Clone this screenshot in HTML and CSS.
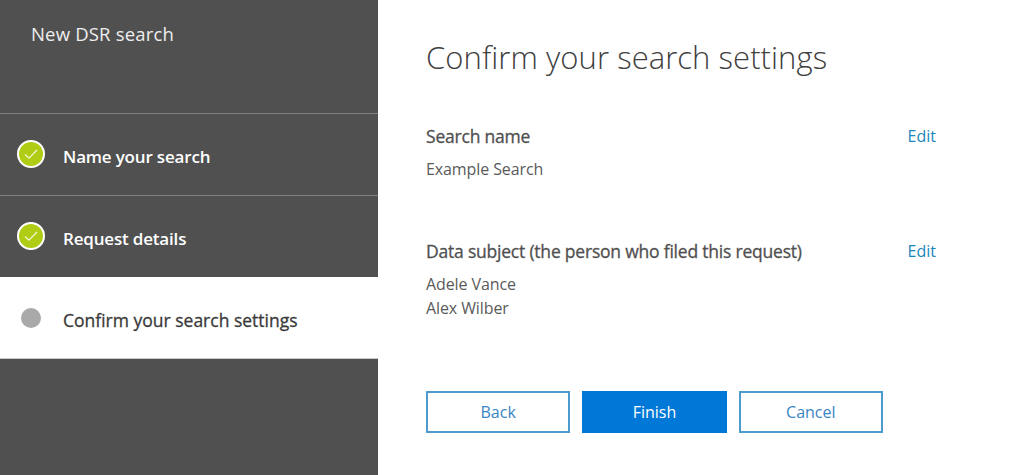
FILE: index.html
```html
<!DOCTYPE html>
<html lang="en">
<head>
    <meta charset="UTF-8">
    <title>New DSR search</title>
    <link rel="stylesheet" href="styles.css">
</head>
<body>
    <div class="wizard">
        <nav class="sidebar">
            <div class="sidebar-title">New DSR search</div>
            <div class="step">
                <span class="step-icon done">
                    <svg viewBox="0 0 16 16" width="16" height="16"><path d="M2 8.5 L6 12.2 L14 4" fill="none" stroke="#f2f8cf" stroke-width="1.3"/></svg>
                </span>
                <span class="step-label">Name your search</span>
            </div>
            <div class="step">
                <span class="step-icon done">
                    <svg viewBox="0 0 16 16" width="16" height="16"><path d="M2 8.5 L6 12.2 L14 4" fill="none" stroke="#f2f8cf" stroke-width="1.3"/></svg>
                </span>
                <span class="step-label">Request details</span>
            </div>
            <div class="step current">
                <span class="step-icon pending"></span>
                <span class="step-label">Confirm your search settings</span>
            </div>
        </nav>
        <main class="content">
            <h1 class="page-title">Confirm your search settings</h1>
            <section class="summary summary-name">
                <div class="summary-head">
                    <h2>Search name</h2>
                    <a class="edit" href="#">Edit</a>
                </div>
                <p>Example Search</p>
            </section>
            <section class="summary summary-subject">
                <div class="summary-head">
                    <h2>Data subject (the person who filed this request)</h2>
                    <a class="edit" href="#">Edit</a>
                </div>
                <p>Adele Vance</p>
                <p>Alex Wilber</p>
            </section>
            <div class="actions">
                <button class="btn">Back</button>
                <button class="btn primary">Finish</button>
                <button class="btn">Cancel</button>
            </div>
        </main>
    </div>
</body>
</html>
```

FILE: styles.css
```css
html, body {
    margin: 0; padding: 0; height: 100%;
    background: #fff;
    overflow: hidden;
}

body { font-family: "Open Sans", "Noto Sans", sans-serif; color: #505050; }

.wizard { display: flex; height: 475px; }

.sidebar {
    width: 378px; flex: none;
    background: #505050;
    color: #fff;
}
.sidebar-title {
    height: 113px; box-sizing: border-box;
    padding: 21px 0 0 31px;
    font-size: 18.5px; line-height: 25px;
    color: #eee;
    letter-spacing: 0.18px;
}

.step {
    height: 82px; box-sizing: border-box;
    display: flex; align-items: center;
    padding-left: 17px;
    border-top: 1px solid #808080;
    font-size: 17px; font-weight: 600;
    letter-spacing: -0.18px;
}
.step.current {
    background: #fff; color: #3a3a3a;
    border-top: none;
    border-bottom: 1px solid #c8c8c8;
    font-size: 17.5px; font-weight: 400;
    letter-spacing: 0;
    -webkit-text-stroke: 0.3px #3a3a3a;
}
.step-icon {
    width: 28px; height: 28px; box-sizing: border-box;
    border-radius: 50%;
    display: flex; align-items: center; justify-content: center;
    margin-right: 18px;
    position: relative; top: -1px;
}
.step-icon.done { background: #b0cc14; border: 2px solid #fff; }
.step-icon.pending {
    width: 20px; height: 20px;
    background: #a9a9a9;
    margin: 0 22px 0 4px;
    top: 0;
}
.step-label { position: relative; top: 2px; }

.content { flex: 1; padding: 0 88px 0 48px; }

.page-title {
    margin: 0;
    padding-top: 35px;
    font-size: 31px; line-height: 44px; font-weight: 300;
    color: #404040;
    letter-spacing: 0.06px;
}

.summary-head { display: flex; justify-content: space-between; align-items: center; }
.summary h2 {
    margin: 0;
    font-size: 17.5px; line-height: 24px; font-weight: 400;
    letter-spacing: -0.21px;
    color: #505050;
    -webkit-text-stroke: 0.3px #505050;
}
.summary p {
    margin: 0;
    font-size: 16px; line-height: 24px;
    letter-spacing: -0.1px;
    color: #5a5a5a;
}
.summary-head + p { margin-top: 9px; }
.summary-name { margin-top: 45px; }
.summary-subject { margin-top: 58px; }
.edit { color: #1a86bb; font-size: 16px; text-decoration: none; }

.actions { display: flex; gap: 12px; width: 457px; margin-top: 71px; }
.btn {
    flex: 1; height: 42px; box-sizing: border-box;
    font: inherit; font-size: 16px;
    color: #3a86c4;
    background: #fff;
    border: 2px solid #4c9ace;
    padding: 0;
}
.btn.primary { background: #0078d7; border-color: #0078d7; color: #fff; }
```
